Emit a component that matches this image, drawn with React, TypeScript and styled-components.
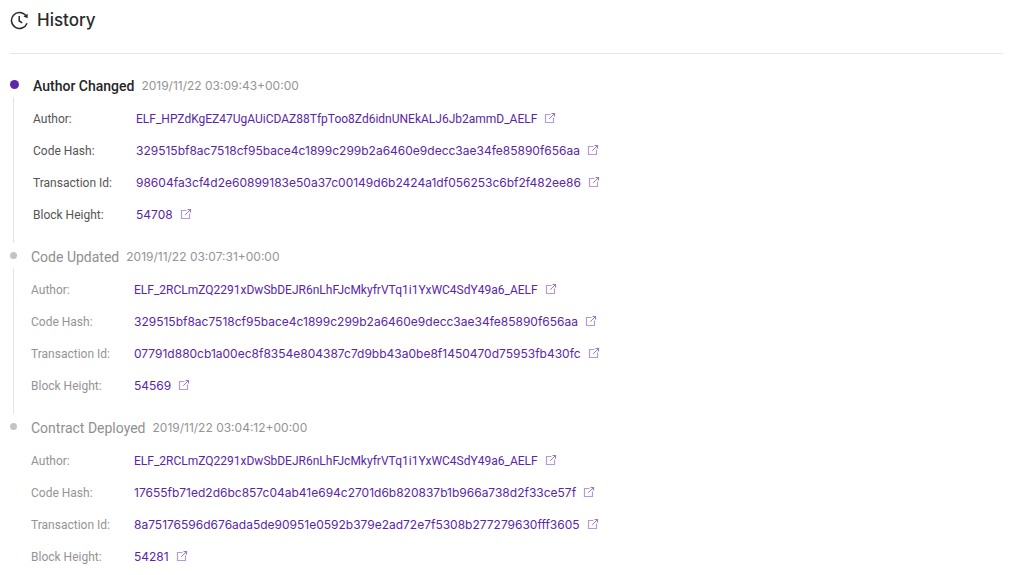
import React from "react";
import styled, { createGlobalStyle } from "styled-components";

const GlobalStyle = createGlobalStyle`
  * { box-sizing: border-box; }
  body {
    margin: 0;
    background: #fff;
    font-family: Roboto, "Liberation Sans", sans-serif;
    font-size: 12px;
    color: #555;
  }
`;

const numericFont = `Inter, "Liberation Sans", sans-serif`;

const Page = styled.main`
  padding: 0 11px 0 10px;
`;

const Header = styled.header`
  display: flex;
  align-items: center;
  gap: 8px;
  height: 54px;
  padding-bottom: 13px;
  border-bottom: 1px solid #e8e8e8;
  color: #2b2b2b;
`;

const Title = styled.h1`
  margin: 0;
  font-family: ${numericFont};
  font-size: 17px;
  line-height: 24px;
  font-weight: 500;
`;

const Timeline = styled.ol`
  margin: 0;
  padding: 18px 0 0;
  list-style: none;
`;

const Entry = styled.li<{ $current: boolean }>`
  display: flex;
  gap: 14px;
  color: ${(p) => (p.$current ? "#555" : "#949494")};
`;

const Rail = styled.div`
  display: flex;
  flex-direction: column;
  align-items: flex-start;
`;

const DotSlot = styled.div`
  display: flex;
  align-items: center;
  height: 25px;
`;

const Dot = styled.span<{ $current: boolean }>`
  width: ${(p) => (p.$current ? 9 : 7)}px;
  height: ${(p) => (p.$current ? 9 : 7)}px;
  border-radius: 50%;
  background: ${(p) => (p.$current ? "#5c28a9" : "#c4c4c4")};
`;

const Line = styled.span`
  flex: 1;
  width: 1px;
  margin-left: 3px;
  background: #e4e4e4;
`;

const Body = styled.div`
  flex: 1;
  min-width: 0;
  padding-bottom: 12px;
`;

const EntryHeader = styled.div`
  display: flex;
  align-items: center;
  gap: 7px;
  height: 28px;
`;

const EntryTitle = styled.h2<{ $current: boolean }>`
  margin: 0;
  font-size: 14px;
  line-height: 20px;
  font-weight: ${(p) => (p.$current ? 500 : 400)};
  color: ${(p) => (p.$current ? "#262626" : "#8f8f8f")};
`;

const Time = styled.time`
  font-family: ${numericFont};
  font-size: 12px;
  line-height: 20px;
  color: #949494;
`;

const Fields = styled.dl`
  margin: 3px 0 0;
`;

const Field = styled.div`
  display: flex;
  align-items: center;
  height: 32px;
`;

const Label = styled.dt`
  flex: 0 0 103px;
`;

const Value = styled.dd`
  margin: 0;
`;

const ValueLink = styled.a<{ $numeric: boolean }>`
  display: flex;
  align-items: center;
  gap: 7px;
  font-family: ${(p) => (p.$numeric ? numericFont : "inherit")};
  line-height: 20px;
  color: #5a26a8;
  text-decoration: none;

  svg {
    margin-bottom: 2px;
  }
`;

const HistoryIcon = () => (
  <svg width="19" height="19" viewBox="0 0 19 19" fill="none" stroke="currentColor" strokeWidth="1.5" aria-hidden="true">
    <path d="M15.8 4.6A8 8 0 1 0 17 12.2" />
    <path d="M17.6 2.8V7.2L13.4 5.6Z" fill="currentColor" stroke="none" />
    <path d="M9.2 5V10L12.2 11.8" />
  </svg>
);

const ExternalIcon = () => (
  <svg width="12" height="12" viewBox="0 0 12 12" fill="none" aria-hidden="true">
    <path d="M6.5 2.5H1.5V10.5H9.5V5.5" stroke="#b39bd8" strokeWidth="1.2" />
    <path d="M5.2 6.8L10 2" stroke="#9a78cb" />
    <path d="M7.5 1.5H10.5V4.5" stroke="#9a78cb" strokeWidth="1.2" />
  </svg>
);

type HistoryEntry = { title: string; time: string; fields: [string, string][] };

const entries: HistoryEntry[] = [
  {
    title: "Author Changed",
    time: "2019/11/22 03:09:43+00:00",
    fields: [
      ["Author", "ELF_HPZdKgEZ47UgAUiCDAZ88TfpToo8Zd6idnUNEkALJ6Jb2ammD_AELF"],
      ["Code Hash", "329515bf8ac7518cf95bace4c1899c299b2a6460e9decc3ae34fe85890f656aa"],
      ["Transaction Id", "98604fa3cf4d2e60899183e50a37c00149d6b2424a1df056253c6bf2f482ee86"],
      ["Block Height", "54708"],
    ],
  },
  {
    title: "Code Updated",
    time: "2019/11/22 03:07:31+00:00",
    fields: [
      ["Author", "ELF_2RCLmZQ2291xDwSbDEJR6nLhFJcMkyfrVTq1i1YxWC4SdY49a6_AELF"],
      ["Code Hash", "329515bf8ac7518cf95bace4c1899c299b2a6460e9decc3ae34fe85890f656aa"],
      ["Transaction Id", "07791d880cb1a00ec8f8354e804387c7d9bb43a0be8f1450470d75953fb430fc"],
      ["Block Height", "54569"],
    ],
  },
  {
    title: "Contract Deployed",
    time: "2019/11/22 03:04:12+00:00",
    fields: [
      ["Author", "ELF_2RCLmZQ2291xDwSbDEJR6nLhFJcMkyfrVTq1i1YxWC4SdY49a6_AELF"],
      ["Code Hash", "17655fb71ed2d6bc857c04ab41e694c2701d6b820837b1b966a738d2f33ce57f"],
      ["Transaction Id", "8a75176596d676ada5de90951e0592b379e2ad72e7f5308b277279630fff3605"],
      ["Block Height", "54281"],
    ],
  },
];

export default function App() {
  return (
    <>
      <GlobalStyle />
      <Page>
        <Header>
          <HistoryIcon />
          <Title>History</Title>
        </Header>
        <Timeline>
          {entries.map((entry, index) => {
            const current = index === 0;
            return (
              <Entry key={entry.title} $current={current}>
                <Rail>
                  <DotSlot>
                    <Dot $current={current} />
                  </DotSlot>
                  {index < entries.length - 1 && <Line />}
                </Rail>
                <Body>
                  <EntryHeader>
                    <EntryTitle $current={current}>{entry.title}</EntryTitle>
                    <Time>{entry.time}</Time>
                  </EntryHeader>
                  <Fields>
                    {entry.fields.map(([label, value]) => (
                      <Field key={label}>
                        <Label>{label}:</Label>
                        <Value>
                          <ValueLink href="#" $numeric={label !== "Author"}>
                            {value}
                            <ExternalIcon />
                          </ValueLink>
                        </Value>
                      </Field>
                    ))}
                  </Fields>
                </Body>
              </Entry>
            );
          })}
        </Timeline>
      </Page>
    </>
  );
}
